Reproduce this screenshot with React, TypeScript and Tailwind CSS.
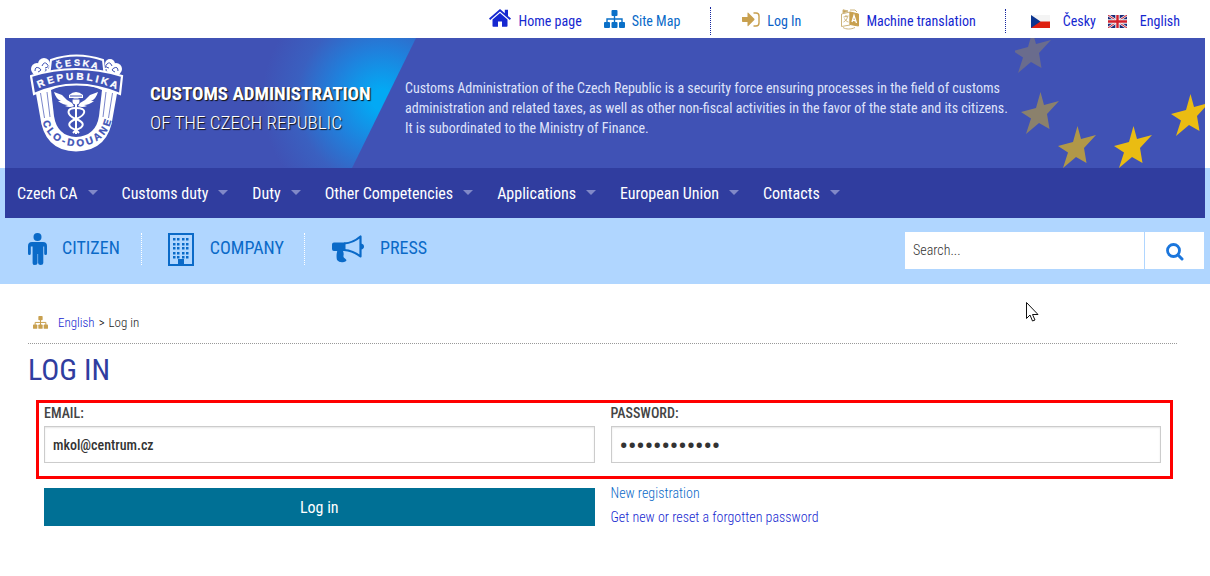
import type { ReactNode } from "react";

const NAV_LINKS = [
  "Czech CA",
  "Customs duty",
  "Duty",
  "Other Competencies",
  "Applications",
  "European Union",
  "Contacts",
];

// position of each star inside the 190x130 banner corner, with its opacity
const STARS = [
  { x: -2, y: -7, opacity: 0.22 },
  { x: 6, y: 54, opacity: 0.4 },
  { x: 43, y: 88, opacity: 0.6 },
  { x: 99, y: 88, opacity: 0.9 },
  { x: 156, y: 56, opacity: 0.9 },
];

function HomeIcon() {
  return (
    <svg width="22" height="18" viewBox="0 0 22 18" fill="currentColor" className="mb-1.5">
      <path d="M11 4L3.500 10.500V17q0 .8.800.8H9V12.500h4v5.300h4.700q.8 0 .8-.8v-6.500z" />
      <path d="M11 0L0 9.500l1.200 1.400L11 2.500l9.800 8.400L22 9.500l-3-2.600V.800h-3.200v3.400z" />
    </svg>
  );
}

function SitemapIcon({ width, className = "" }: { width: number; className?: string }) {
  return (
    <svg width={width} viewBox="0 0 21 18" fill="currentColor" className={className}>
      <rect x="7.500" width="6" height="6" rx="1" />
      <rect y="12" width="6" height="6" rx="1" />
      <rect x="7.500" y="12" width="6" height="6" rx="1" />
      <rect x="15" y="12" width="6" height="6" rx="1" />
      <path d="M3 12.500V9h15v3.500M10.500 5v8" fill="none" stroke="currentColor" strokeWidth="1.400" />
    </svg>
  );
}

function SignInIcon() {
  return (
    <svg width="18" height="15" viewBox="0 0 18 15" fill="currentColor" className="mb-1">
      <path d="M0 5h5.500V1.200q0-1 .8-.4l6 6q.5.600 0 1.200l-6 6q-.8.600-.8-.4V10H.8Q0 10 0 9.200z" />
      <path d="M11.500 1H14q3 0 3 3v7q0 3-3 3h-2.500" fill="none" stroke="currentColor" strokeWidth="1.400" />
    </svg>
  );
}

function TranslateIcon() {
  return (
    <svg width="18" height="21" viewBox="0 0 18 21" fill="none" stroke="#cdb47c" className="mb-1">
      <path d="M.5 5l8.500-2v13l-8.500 1.500z" />
      <path d="M2.500 8l5-1M5 6v1.500M6.500 7.500c-.5 3-2 4.500-4 5.500M3.500 9.500c1 2 2 3 4 3.500" />
      <path d="M9 3l8.500 2v12L9 15.500z" fill="#c8a04f" stroke="#c8a04f" />
      <path d="M11 13l2-6.500 2.500 7.500M11.500 11.200l3 .6" stroke="#fff" strokeWidth="1.300" />
      <path d="M2 .8l5 1.200-5 2z" fill="#c8a04f" />
      <path d="M9 1h5l2 2M2 18.500c3 2 8 2 12 0" />
    </svg>
  );
}

function PersonIcon() {
  return (
    <svg width="19" height="32" viewBox="0 0 19 32" fill="currentColor">
      <circle cx="9.500" cy="4" r="4" />
      <path d="M4 9h11q4 0 4 4v7.500q0 1.500-1.400 1.500t-1.400-1.500V13.500h-.9V30q0 2-2.600 2t-2.600-2v-9h-.6v9q0 2-2.500 2t-2.400-2V13.500H2.800v7q0 1.500-1.400 1.500T0 20.500V13q0-4 4-4z" />
    </svg>
  );
}

function BuildingIcon() {
  const cols = [5, 9, 14, 18];
  const rows = [5, 10, 14, 19, 23];
  return (
    <svg width="26" height="33" viewBox="0 0 26 33" fill="currentColor">
      <path d="M0 0h26v33H0zM2 2v29h8v-5h6v5h8V2z" fillRule="evenodd" />
      <path d="M10 26h6v6h-6z" />
      {rows.map((y) => cols.map((x) => <rect key={`${x}-${y}`} x={x} y={y} width="2.500" height="2.500" />))}
    </svg>
  );
}

function MegaphoneIcon() {
  return (
    <svg width="32" height="28" viewBox="0 0 32 28" fill="currentColor">
      <path d="M2 7.500h11.500v8.500H11q1 2.500.5 4.500t1.500 3l1.500 1.500q-.5 2-4 2.200T5 25q-1-4 .2-9H2q-2 0-2-2V9.500q0-2 2-2z" />
      <path d="M12 8.500Q21 8 28.500 1.500v20Q21 15.500 12 15" fill="none" stroke="currentColor" strokeWidth="2.200" strokeLinejoin="round" />
      <path d="M29 8.500q3 .5 3 3t-3 3z" />
    </svg>
  );
}

function SearchIcon() {
  return (
    <svg width="18" height="18" viewBox="0 0 18 18" fill="none" stroke="currentColor" strokeLinecap="round">
      <circle cx="7.500" cy="7.500" r="6" strokeWidth="2.800" />
      <path d="M12 12l4 4" strokeWidth="3" />
    </svg>
  );
}

function CzechFlag() {
  return (
    <svg width="19" height="13" viewBox="0 0 19 13">
      <path d="M0 0h19v7H0z" fill="#f4f4f4" />
      <path d="M0 6.500h19V13H0z" fill="#de2010" />
      <path d="M0 0l9.500 6.500L0 13z" fill="#0c3590" />
    </svg>
  );
}

function BritishFlag() {
  return (
    <svg width="19" height="13" viewBox="0 0 19 13">
      <path d="M0 0h19v13H0z" fill="#1b2a78" />
      <path d="M0 0l19 13M19 0L0 13" stroke="#e8e8f0" strokeWidth="2.400" />
      <path d="M0 0l19 13M19 0L0 13" stroke="#d2202c" strokeWidth="1" />
      <path d="M9.500 0v13M0 6.500h19" stroke="#f4f4f4" strokeWidth="4.400" />
      <path d="M9.500 0v13M0 6.500h19" stroke="#d2202c" strokeWidth="2.400" />
    </svg>
  );
}

function Crest() {
  return (
    <svg width="94" height="98" viewBox="0 0 94 98" className="shrink-0" role="img" aria-label="Česká republika, Clo - Douane">
      <defs>
        <path id="arc-top" d="M20 18.500Q46 5 74 18.500" />
        <path id="arc-mid" d="M5 36Q46 15 90 37" />
        <path id="arc-bottom" d="M12 64C17 102 77 102 82 63" />
      </defs>
      <path d="M5 34L10 62Q14 97 46 97.500Q79 97 83 62L88 34Q46 14 5 34z" fill="#fff" />
      <path d="M21 36L24 62Q27 82 46 83Q66 82 69 62L72 36Q46 24 21 36z" fill="#4052b5" />
      <path d="M10.500 39l4 25M82.500 39l-4 25M17 38l3 25M76 38l-3 25" stroke="#4052b5" fill="none" strokeWidth=".7" />
      <g fill="#fff">
        <circle cx="7" cy="15" r="6" />
        <circle cx="14" cy="10" r="6" />
        <circle cx="15" cy="18" r="5" />
        <circle cx="86" cy="15" r="6" />
        <circle cx="80" cy="10" r="5" />
        <circle cx="78" cy="18" r="5" />
      </g>
      <g fill="none" stroke="#4052b5">
        <path d="M5 17q0-5 4-3t-1 4M12 12q2-5 5-2t-2 4M13 19q4-1 3-4M88 17q0-5-4-3t1 4M82 12q-2-5-5-2t2 4M79 19q-4-1-3-4" />
      </g>
      <path d="M21 6Q46-3 73 6l2 18Q46 12 19 23z" fill="#4052b5" stroke="#fff" strokeWidth="2" />
      <path d="M1 22Q46 8 92 22l-2 18Q46 21 4 40z" fill="#4052b5" stroke="#fff" strokeWidth="2.200" />
      <g className="font-['Liberation_Sans'] font-bold" textAnchor="middle" strokeWidth=".3">
        <text fill="#fff" stroke="#fff" fontSize="9"><textPath href="#arc-top" startOffset="50%">Č E S K A</textPath></text>
        <text fill="#fff" stroke="#fff" fontSize="10"><textPath href="#arc-mid" startOffset="50%">R E P U B L I K A</textPath></text>
        <text fill="#4052b5" stroke="#4052b5" fontSize="10"><textPath href="#arc-bottom" startOffset="50%">C L O - D O U A N E</textPath></text>
      </g>
      <g fill="#fff">
        <path d="M42 49Q36 46 32 41L24 38Q26 45 31 47L28 47Q33 51 38 51L35 52Q40 54 44 52z" />
        <path d="M50 49Q56 46 60 41L68 38Q66 45 61 47L64 47Q59 51 54 51L57 52Q52 54 48 52z" />
        <path d="M39 41Q46 35 53 41v3H39z" />
        <circle cx="46" cy="47" r="3.500" />
        <path d="M45 48h2v32h-2z" />
      </g>
      <g fill="none" stroke="#fff" strokeWidth="2">
        <path d="M46 54C36 54 36 61 46 65S54 73 46 76" />
        <path d="M46 54C58 54 56 61 46 65S38 73 46 76M43 79l3-3 3 3" />
      </g>
      <path d="M40 42h12M43 45h6" stroke="#4052b5" />
    </svg>
  );
}

function TopLink({ icon, children, className = "" }: { icon: ReactNode; children: ReactNode; className?: string }) {
  return (
    <a href="#" className={`flex items-center ${className}`}>
      {icon}
      <span>{children}</span>
    </a>
  );
}

function TopBar() {
  return (
    <div className="flex h-[38px] items-center justify-end pt-1 pr-[30px] text-sm text-[#1527d0]">
      <TopLink icon={<HomeIcon />} className="mr-[22px] gap-2">Home page</TopLink>
      <TopLink icon={<SitemapIcon width={21} className="mb-1 text-[#0a70c8]" />} className="gap-[7px] text-[#0a6ac8]">Site Map</TopLink>
      <span className="mr-[31px] ml-[30px] h-7 border-l border-dotted border-[#1527a0]" />
      <TopLink icon={<span className="text-[#c8a04f]"><SignInIcon /></span>} className="mr-10 gap-[7px] text-[#0a5fc8]">Log In</TopLink>
      <TopLink icon={<TranslateIcon />} className="gap-[7px]">Machine translation</TopLink>
      <span className="mr-[25px] ml-[29px] h-6 border-l border-dotted border-[#1527a0]" />
      <TopLink icon={<CzechFlag />} className="mr-3 gap-[13px]">Česky</TopLink>
      <TopLink icon={<BritishFlag />} className="gap-[13px]">English</TopLink>
    </div>
  );
}

function Banner() {
  return (
    <header className="relative mx-[5px] flex h-[130px] items-center overflow-hidden bg-[#4052b5] pl-[25px]">
      <div className="absolute inset-y-0 left-0 w-[411px] bg-[radial-gradient(circle_at_377px_62px,#03a9f4_0,#03a9f4_10px,#2080dc_50px,#3a60c0_85px,#4052b5_120px)] [clip-path:polygon(0_0,100%_0,347px_100%,0_100%)]" />
      <svg width="190" height="130" viewBox="0 0 190 130" className="absolute top-0 right-0">
        {STARS.map((s) => (
          <path
            key={s.x}
            transform={`translate(${s.x} ${s.y})`}
            opacity={s.opacity}
            fill="#fdc800"
            d="M19.500 0l3.500 13 15-4-12 13 2.500 15-10.500-6L5 42l5-15.500L0 20l15-4z"
          />
        ))}
      </svg>
      <div className="relative flex items-center">
        <Crest />
        <div className="ml-[26px] w-[255px] pt-2.5 text-[19px] leading-[29px] text-white uppercase [text-shadow:1px_1px_1px_#111]">
          <div className="font-bold whitespace-nowrap">Customs Administration</div>
          <div className="font-light whitespace-nowrap">of the Czech Republic</div>
        </div>
        <p className="max-w-[610px] pt-2.5 text-sm leading-5 text-[#dfe3fa]">
          Customs Administration of the Czech Republic is a security force ensuring processes in the field of customs
          administration and related taxes, as well as other non-fiscal activities in the favor of the state and its
          citizens. It is subordinated to the Ministry of Finance.
        </p>
      </div>
    </header>
  );
}

function SubNav() {
  return (
    <div className="flex h-[66px] items-center pr-1.5 pb-1 pl-7 text-lg text-[#0a6ac8] uppercase">
      <a href="#" className="flex items-center gap-[15px]">
        <PersonIcon />
        <span className="pb-0.5">Citizen</span>
      </a>
      <span className="mr-[26px] ml-[21px] h-8 border-l border-dotted border-white" />
      <a href="#" className="flex items-center gap-4">
        <BuildingIcon />
        <span className="pb-0.5">Company</span>
      </a>
      <span className="mr-[27px] ml-5 h-8 border-l border-dotted border-white" />
      <a href="#" className="flex items-center gap-4">
        <MegaphoneIcon />
        <span className="pb-0.5">Press</span>
      </a>
      <form className="mt-0.5 ml-auto flex h-[37px] w-[299px] bg-white" onSubmit={(e) => e.preventDefault()}>
        <input
          type="search"
          aria-label="Search"
          placeholder="Search..."
          className="min-w-0 flex-1 px-2 text-sm font-light text-[#333] outline-none placeholder:text-[#333]"
        />
        <button type="submit" aria-label="Search" className="flex w-[60px] items-center justify-center border-l border-[#b0d6ff] pt-1 text-[#1b76dc]">
          <SearchIcon />
        </button>
      </form>
    </div>
  );
}

function LoginForm() {
  const label = "block text-sm leading-[17px] font-medium text-[#444] uppercase";
  const field = "mt-1 h-[37px] w-full border border-[#ccc] bg-white px-2 font-medium text-[#333] shadow-[inset_0_1px_2px_rgba(0,0,0,0.1)] outline-none";
  return (
    <form className="mt-3 mr-1 ml-2" onSubmit={(e) => e.preventDefault()}>
      <div className="grid grid-cols-2 gap-4 border-[3px] border-[#f00] pt-0.5 pr-[9px] pb-[13px] pl-[5px]">
        <div>
          <label htmlFor="email" className={label}>Email:</label>
          <input id="email" type="email" defaultValue="mkol@centrum.cz" className={`${field} text-sm`} />
        </div>
        <div>
          <label htmlFor="password" className={label}>Password:</label>
          <input id="password" type="password" defaultValue="abcdefghijkl" className={`${field} pt-0.5 text-2xl`} />
        </div>
      </div>
      <div className="mt-[9px] grid grid-cols-2 gap-4 pr-3 pl-2">
        <button type="submit" className="h-[38px] bg-[#007095] pt-0.5 text-base text-white">Log in</button>
        <div className="-mt-[7px] flex flex-col items-start text-sm leading-6 font-light">
          <a href="#" className="text-[#0a6ac8]">New registration</a>
          <a href="#" className="text-[#1527d0]">Get new or reset a forgotten password</a>
        </div>
      </div>
    </form>
  );
}

export default function App() {
  return (
    <div className="min-h-screen bg-white font-['Roboto_Condensed','Liberation_Sans_Narrow','Roboto',sans-serif]">
      <TopBar />
      <Banner />
      <div className="bg-[#b0d6ff]">
        <nav className="mx-[5px] flex h-[50px] items-center gap-6 bg-[#303d9f] pt-0.5 pl-3 text-base text-white">
          {NAV_LINKS.map((label) => (
            <a key={label} href="#" className="flex items-center gap-2.5 whitespace-nowrap">
              {label}
              <span className="mb-1 border-x-[5px] border-t-[5px] border-x-transparent border-t-[#8189c8]" />
            </a>
          ))}
        </nav>
        <SubNav />
      </div>

      <main className="mr-[33px] ml-7 pt-[27px]">
        <div className="flex h-[33px] items-start border-b border-dotted border-[#999] pl-[5px] text-[13px] leading-6 font-light">
          <SitemapIcon width={15} className="mt-[5px] mr-2.5 text-[#c8a04f]" />
          <a href="#" className="text-[#1527d0]">English</a>
          <span className="mx-1">&gt;</span>
          <span className="text-[#222]">Log in</span>
        </div>
        <h1 className="mt-2 text-[30px] leading-9 text-[#303d9f] uppercase">Log in</h1>
        <LoginForm />
      </main>

      {/* mouse pointer */}
      <svg width="13" height="20" viewBox="0 0 13 20" className="absolute top-[302px] left-[1026px]">
        <path d="M.5.500v16l3.500-3.500 2.500 6 2.500-1-2.500-5.500H12z" fill="#fff" stroke="#111" />
      </svg>
    </div>
  );
}
